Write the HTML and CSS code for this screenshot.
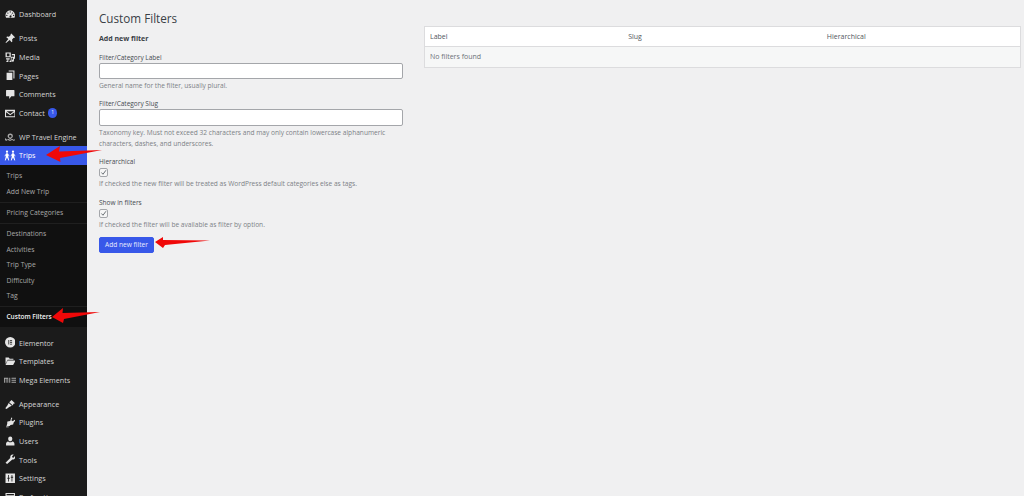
FILE: index.html
```html
<!DOCTYPE html>
<html lang="en">
<head>
<meta charset="utf-8">
<title>Custom Filters</title>
<link rel="stylesheet" href="styles.css">
</head>
<body>
<div class="app">
  <nav class="side">
    <ul class="group first">
      <li class="item"><svg class="ic" viewBox="0 0 20 20"><path d="M10 3C5 3 1 7 1 12c0 1.500.3 3 1 4.500h16c.7-1.500 1-3 1-4.500 0-5-4-9-9-9zm0 1.500a1.200 1.200 0 1 1 0 2.400 1.200 1.200 0 0 1 0-2.400zM5.500 6.500a1.200 1.200 0 1 1 0 2.400 1.200 1.200 0 0 1 0-2.400zm9 0a1.200 1.200 0 1 1 0 2.400 1.200 1.200 0 0 1 0-2.400zM13.500 8l-2 4.500a2 2 0 1 1-3 1.700 2 2 0 0 1 2-1.900zM3.500 11a1.200 1.200 0 1 1 0 2.400 1.200 1.200 0 0 1 0-2.400zm13 0a1.200 1.200 0 1 1 0 2.400 1.200 1.200 0 0 1 0-2.400z" fill-rule="evenodd"/></svg>Dashboard</li>
    </ul>
    <ul class="group">
      <li class="item"><svg class="ic" viewBox="0 0 20 20"><path d="M12 1l7 7-1.500 1.500-1-.5-3 3.500.5 3.500-1.500 1.500-3.500-4L2 19l-1-1 5.500-6.500-4-3.500L4 6.500 7.500 7 11 4l-.5-1.500z"/></svg>Posts</li>
      <li class="item"><svg class="ic" viewBox="0 0 20 20"><path d="M1 1h10v9H1zm2.500 2v5h5V3zM13 4h6v9h-2V6h-4zM2 12h7v2.500H6.500V18a2 2 0 1 1-2-2h.3v-1.500H2zM11 9h6v7.500a2 2 0 1 1-2-2V11h-2.500v7a2 2 0 1 1-2-2H11z" fill-rule="evenodd"/></svg>Media</li>
      <li class="item"><svg class="ic" viewBox="0 0 20 20"><path d="M7 1h11v15h-2V3H7zM3 5h11v14H3z"/></svg>Pages</li>
      <li class="item"><svg class="ic" viewBox="0 0 20 20"><path d="M3 2h14a1 1 0 0 1 1 1v10a1 1 0 0 1-1 1h-5l-4 5v-5H3a1 1 0 0 1-1-1V3a1 1 0 0 1 1-1z"/></svg>Comments</li>
      <li class="item"><svg class="ic" viewBox="0 0 20 20"><path d="M0 3.500h20v14H0zM3 6l7 5.500L17 6zm-1 2v7.500h16V8l-8 6z" fill-rule="evenodd"/></svg>Contact<span class="badge">1</span></li>
    </ul>
    <ul class="group">
      <li class="item"><svg class="ic dim" viewBox="0 0 20 20"><path d="M0 12c1 0 2 .5 2.500 1.500C3 14.500 4 15 5 14c1-1 2-1 3 0s3 1 4 0 2-1 3 0 3 1 5-1v2c-2 2-4 2-5 1s-2-1-3 0-4 1-5 0-2-1-3 0c-2 1-3 .5-4-1-.5-.7-1-1-2-1zM10 3a5 5 0 0 1 5 5c0 2-2 4-5 6-3-2-5-4-5-6a5 5 0 0 1 5-5zm0 2.500a2.500 2.500 0 1 0 0 5 2.500 2.500 0 0 0 0-5z" fill-rule="evenodd"/></svg><span class="nowrap">WP Travel Engine</span></li>
      <li class="item active"><svg class="ic trips" viewBox="0 0 24 20"><path d="M6 0a2.300 2.300 0 1 1 0 4.600A2.300 2.300 0 0 1 6 0zm12 0a2.300 2.300 0 1 1 0 4.600A2.300 2.300 0 0 1 18 0zM4.500 5.500h3L11 11l-1 .8-2-2.800.5 3.500L10.500 20H9l-3-6-3 6H1.500l2-7.500L4 9l-2 2.800-1-.8zm12 0h3L23 11l-1 .8-2-2.800.5 3.500L22.500 20H21l-3-6-3 6h-1.500l2-7.500L16 9l-2 2.800-1-.8z"/></svg>Trips</li>
      <li class="sub">
        <ul class="sublist">
          <li class="subitem">Trips</li>
          <li class="subitem">Add New Trip</li>
          <li class="subitem sep">Pricing Categories</li>
          <li class="subitem sep">Destinations</li>
          <li class="subitem">Activities</li>
          <li class="subitem">Trip Type</li>
          <li class="subitem">Difficulty</li>
          <li class="subitem">Tag</li>
          <li class="subitem sep current">Custom Filters</li>
        </ul>
      </li>
    </ul>
    <ul class="group after-sub">
      <li class="item"><svg class="ic" viewBox="0 0 20 20"><path d="M10 0a10 10 0 1 1 0 20 10 10 0 0 1 0-20zM6.500 5.500v9H8v-9zm3 0V7h4V5.500zm0 3.700v1.600h4V9.200zm0 3.800v1.500h4V13z" fill-rule="evenodd"/></svg>Elementor</li>
      <li class="item"><svg class="ic" viewBox="0 0 20 20"><path d="M1 3h6l2 2h7v2H5L1 15zM5 8.500h15L15.500 17H1z"/></svg>Templates</li>
      <li class="item"><svg class="ic dim wide" viewBox="0 0 24 20"><path d="M0 5h8.500v10H6.800V7H5v8H3.500V7H1.800v8H0zM10.500 5h2v10h-2zM15 5h9v1.800h-9zM15 9.100h9v1.800h-9zM15 13.200h9V15h-9z"/></svg>Mega Elements</li>
    </ul>
    <ul class="group">
      <li class="item"><svg class="ic" viewBox="0 0 20 20"><path d="M12.500 2L19 8l-3 1-1 3.500L8 6zM7 7.500l6 5.500-5 2-5 4-2.500-1.500 4-5z"/></svg>Appearance</li>
      <li class="item"><svg class="ic" viewBox="0 0 20 20"><path d="M12 1l2 1-2 4 3 2 3-3 1.500 2-3 3.500-1 4-5 .5L9 17H3l1.500-5.500L4 9l3-1 3-.5zM2 18h5v1.500H2z"/></svg>Plugins</li>
      <li class="item"><svg class="ic" viewBox="0 0 20 20"><path d="M10 1a4 4 0 0 1 4 4c0 3-2 5-4 5S6 8 6 5a4 4 0 0 1 4-4zM6 10.500l2 1.500h4l2-1.500c3 .5 4 2.500 4 4.500v3H2v-3c0-2 1-4 4-4.500z"/></svg>Users</li>
      <li class="item"><svg class="ic" viewBox="0 0 20 20"><path d="M14.500 1c1 0 1.700.2 2 .5L13.500 4.500l.5 2 2 .5 3-3c.3.500.5 1.200.5 2 0 3-2.500 5-5.500 4.500L4 19l-3-2.500 9-9C9.500 4 11.500 1 14.500 1z"/></svg>Tools</li>
      <li class="item"><svg class="ic" viewBox="0 0 20 20"><path d="M1 1h18v18H1zM6 4v5H4.500v2H6v5h1.500v-5H9V9H7.500V4zm6.500 0v3H11v2h1.500v7H14V9h1.500V7H14V4z" fill-rule="evenodd"/></svg>Settings</li>
      <li class="item"><svg class="ic" viewBox="0 0 20 20"><path d="M1 2h18v15H1zM3 4v2h14V4z" fill-rule="evenodd"/></svg>Perfmatters</li>
    </ul>
  </nav>

  <main class="content">
    <h1 class="title">Custom Filters</h1>
    <div class="columns">
      <form class="form">
        <h2 class="form-title">Add new filter</h2>
        <div class="field">
          <label class="label">Filter/Category Label</label>
          <div class="input"></div>
          <p class="hint">General name for the filter, usually plural.</p>
        </div>
        <div class="field">
          <label class="label">Filter/Category Slug</label>
          <div class="input"></div>
          <p class="hint">Taxonomy key. Must not exceed 32 characters and may only contain lowercase alphanumeric characters, dashes, and underscores.</p>
        </div>
        <div class="field">
          <label class="label">Hierarchical</label>
          <div class="check"><svg viewBox="0 0 10 10"><path d="M2 5l2.300 2.500L8.500 1.800" fill="none" stroke="#50575e" stroke-width="1.200"/></svg></div>
          <p class="hint">If checked the new filter will be treated as WordPress default categories else as tags.</p>
        </div>
        <div class="field">
          <label class="label">Show in filters</label>
          <div class="check"><svg viewBox="0 0 10 10"><path d="M2 5l2.300 2.500L8.500 1.800" fill="none" stroke="#50575e" stroke-width="1.200"/></svg></div>
          <p class="hint">If checked the filter will be available as filter by option.</p>
        </div>
        <button class="btn" type="button">Add new filter</button>
      </form>
      <section class="panel">
        <table class="table">
          <thead>
            <tr><th>Label</th><th>Slug</th><th>Hierarchical</th></tr>
          </thead>
          <tbody>
            <tr><td colspan="3">No filters found</td></tr>
          </tbody>
        </table>
      </section>
    </div>
  </main>
</div>

<svg class="arrow a1" viewBox="0 0 56 16"><path d="M0 9L14 0l-1 5.500L56 4 14 12l.5 4z"/></svg>
<svg class="arrow a2" viewBox="0 0 48 15"><path d="M0 9L11 0l-.5 5L48 4 12 11l-1 4z"/></svg>
<svg class="arrow a3" viewBox="0 0 55 11"><path d="M0 5L8 0v3L55 3.500 10 8 8 11z"/></svg>
</body>
</html>
```
FILE: styles.css
```css
* { box-sizing: border-box; }
html, body { margin: 0; padding: 0; height: 496px; overflow: hidden; }
body {
  position: relative;
  background: #f0f0f1;
  font-family: "Open Sans", "Liberation Sans", sans-serif;
  font-size: 7px;
  color: #3c434a;
}
ul { list-style: none; margin: 0; padding: 0; }
.app { display: flex; height: 496px; }

.side { width: 87px; flex: none; background: #1b1b1b; height: 496px; overflow: hidden; padding-top: 5px; }
.group { margin-bottom: 5.500px; }
.item { display: flex; align-items: center; height: 18.600px; padding-left: 4.500px; gap: 4px; font-size: 7.200px; color: #d4d4d4; }
.ic { width: 10.500px; height: 10.500px; flex: none; fill: #e4e4e4; }
.ic.dim { fill: #a8a8a8; }
.ic.wide { width: 12px; margin-left: -0.500px; margin-right: -1px; }
.ic.trips { width: 12px; height: 11px; margin-left: -0.500px; margin-right: -1px; fill: #fff; }
.nowrap { white-space: nowrap; }
.badge { display: inline-block; width: 9.500px; height: 9.500px; border-radius: 50%; background: #3858e9; color: #fff; font-size: 5px; line-height: 9.500px; text-align: center; margin-left: -1px; }
.item.active { background: #3858e9; color: #fff; }
.sub { background: #101010; padding: 3.500px 0 2.500px; }
.subitem { height: 15.400px; line-height: 15.400px; padding-left: 6.500px; font-size: 6.800px; color: #a8a8a8; white-space: nowrap; }
.sep { box-sizing: content-box; margin-top: 3px; padding-top: 2px; border-top: 1px solid #1f1f1f; }
.current { color: #f4f4f4; font-weight: 600; font-size: 6.500px; }
.after-sub { margin-top: 6px; }

.content { flex: 1; padding: 10px 3px 0 12px; }
.title { margin: 0; font-size: 11.700px; line-height: 16px; font-weight: 400; color: #3a4046; }
.columns { display: flex; gap: 21px; margin-top: 8px; }
.form { width: 304px; flex: none; }
.form-title { margin: 0 0 8.500px; font-size: 7px; line-height: 10px; font-weight: 700; color: #3a4046; }
.field { margin-bottom: 8.200px; }
.label { display: block; font-size: 6.500px; line-height: 10px; color: #454b50; }
.input { width: 304px; height: 16.500px; margin-bottom: 1px; background: #fff; border: 1px solid #a4a6aa; border-radius: 2px; }
.hint { margin: 0; font-size: 6.600px; line-height: 11px; color: #7c8186; }
.check { width: 9px; height: 9px; margin: 1.500px 0 1px; background: #f6f6f6; border: 1px solid #a4a6aa; border-radius: 2px; display: flex; }
.check svg { width: 100%; height: 100%; display: block; }
.btn { display: block; width: 55px; height: 16.500px; margin-top: -1.500px; padding: 0; background: #3858e9; color: #e8ecff; border: 1px solid #3858e9; border-radius: 2px; font: 6.600px/14px "Open Sans", "Liberation Sans", sans-serif; }

.panel { flex: 1; margin-top: -8px; }
.table { width: 100%; border-collapse: collapse; table-layout: fixed; border: 1px solid #dcdcde; font-size: 7px; }
.table th { height: 20px; padding: 0 5px; background: #fff; font-weight: 400; text-align: left; color: #50575e; border-bottom: 1px solid #dcdcde; }
.table td { height: 20.500px; padding: 0 5px; background: #f6f7f7; color: #6c7278; }

.arrow { position: absolute; fill: #f00808; }
.a1 { left: 46px; top: 146px; width: 56px; height: 16px; }
.a2 { left: 52px; top: 308px; width: 48px; height: 15px; }
.a3 { left: 155px; top: 237px; width: 55px; height: 11px; }
```
